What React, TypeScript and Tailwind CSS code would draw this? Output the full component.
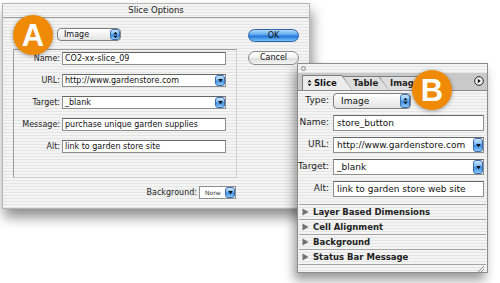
import React from "react";

const stripes =
  "bg-[image:repeating-linear-gradient(180deg,#f4f4f4_0px,#f4f4f4_2px,#e5e5e5_2px,#e5e5e5_3px)]";

function Cap({ updown }: { updown?: boolean }) {
  return (
    <span className="flex w-[10px] shrink-0 items-center justify-center rounded-[3px] border border-[#3b6db3] bg-[linear-gradient(180deg,#cfe7fd_0%,#73b5f3_45%,#3b8ae0_55%,#8fcaf7_100%)]">
      {updown ? (
        <svg width="5" height="8" viewBox="0 0 5 8">
          <path d="M0.5 3.3 L2.5 0.8 L4.5 3.3Z M0.5 4.7 L2.5 7.2 L4.5 4.7Z" fill="#111" />
        </svg>
      ) : (
        <svg width="5" height="5" viewBox="0 0 5 5">
          <path d="M0.2 1H4.8L2.5 4.2Z" fill="#111" />
        </svg>
      )}
    </span>
  );
}

function Field({ value, select }: { value: string; select?: boolean }) {
  return (
    <div className="flex h-[13px] w-[164px] items-stretch border border-[#8e8e8e] border-t-[#666] bg-white">
      <span className="flex-1 truncate pl-[2px] text-[8px] leading-[11px] text-[#111]">{value}</span>
      {select && <Cap />}
    </div>
  );
}

function Row({ label, children }: { label: string; children: React.ReactNode }) {
  return (
    <div className="flex items-center">
      <span className="w-[48px] pr-[2px] text-right text-[8px] text-[#222]">{label}</span>
      {children}
    </div>
  );
}

function PField({ value, select, w }: { value: string; select?: boolean; w?: string }) {
  return (
    <div className={`flex h-[16px] items-stretch border border-[#8e8e8e] border-t-[#666] bg-white ${w ?? "flex-1"}`}>
      <span className="flex-1 truncate whitespace-nowrap pl-[3px] text-[9px] leading-[14px] text-[#111]">{value}</span>
      {select && <Cap />}
    </div>
  );
}

function PRow({ label, children }: { label: string; children: React.ReactNode }) {
  return (
    <div className="flex items-center pr-[3px]">
      <span className="w-[35px] shrink-0 pr-[4px] text-right text-[9px] text-[#222]">{label}</span>
      {children}
    </div>
  );
}

function Section({ label }: { label: string }) {
  return (
    <div className="mx-[1px] flex h-[15px] items-center gap-[4px] border-t border-[#a4a4a4] pl-[3px]">
      <svg width="7" height="8" viewBox="0 0 7 8">
        <path d="M0.5 0.5 L6.5 4 L0.5 7.5Z" fill="#707070" />
      </svg>
      <span className="text-[8.5px] font-bold text-[#222]">{label}</span>
    </div>
  );
}

function Badge({ letter, className }: { letter: string; className: string }) {
  return (
    <div
      className={`absolute flex h-[40px] w-[40px] items-center justify-center rounded-full bg-[#ef8a06] font-['Liberation_Sans',sans-serif] text-[31px] font-bold leading-none text-white shadow-[0_1px_4px_rgba(0,0,0,0.35)] ${className}`}
    >
      {letter}
    </div>
  );
}

export default function App() {
  return (
    <div className="relative h-[283px] w-[500px] overflow-hidden bg-white font-['DejaVu_Sans',sans-serif]">
      {/* Slice Options dialog */}
      <div className={`absolute left-[2px] top-[3px] h-[206px] w-[308px] border border-[#b5b5b5] ${stripes} shadow-[2px_8px_12px_rgba(0,0,0,0.45)]`}>
        <div className="h-[14px] border-b border-[#a0a0a0] text-center text-[8.5px] leading-[13px] text-[#222]">
          Slice Options
        </div>
        <div className="flex pl-[10px] pt-[10px]">
          <div className="w-[224px]">
            <div className="flex h-[13px] items-center">
              <span className="w-[42px] pr-[2px] text-right text-[8px] text-[#222]">Slice:</span>
              <div className="ml-[2px] flex h-[13px] w-[64px] items-stretch overflow-hidden rounded-[4px] border border-[#7f7f7f] bg-[linear-gradient(180deg,#ffffff,#e3e3e3)]">
                <span className="flex-1 pl-[6px] text-[8px] leading-[11px] text-[#111]">Image</span>
                <Cap updown />
              </div>
            </div>
            <div className="mt-[8px] flex h-[129px] flex-col gap-[9px] border border-[#9c9c9c] border-b-[#cfcfcf] border-r-[#cfcfcf] pt-[2px]">
              <Row label="Name:">
                <Field value="CO2-xx-slice_09" />
              </Row>
              <Row label="URL:">
                <Field value="http://www.gardenstore.com" select />
              </Row>
              <Row label="Target:">
                <Field value="_blank" select />
              </Row>
              <Row label="Message:">
                <Field value="purchase unique garden supplies" />
              </Row>
              <Row label="Alt:">
                <Field value="link to garden store site" />
              </Row>
            </div>
            <div className="mt-[8px] flex items-center justify-end pr-[1px]">
              <span className="pr-[2px] text-[8px] text-[#222]">Background:</span>
              <div className="flex h-[13px] w-[37px] items-stretch border border-[#8e8e8e] bg-white">
                <span className="flex-1 pl-[5px] text-[6px] leading-[11px] text-[#333]">None</span>
                <Cap />
              </div>
            </div>
          </div>
          <div className="ml-[11px] flex flex-col gap-[9px] pt-[1px]">
            <div className="flex h-[13px] w-[51px] items-center justify-center rounded-full border border-[#2d5fa6] bg-[linear-gradient(180deg,#b3dafb_0%,#5aa5ef_45%,#2274d8_55%,#74c3f8_100%)] text-[8px] text-[#111]">
              OK
            </div>
            <div className="flex h-[14px] w-[51px] items-center justify-center rounded-full border border-[#8a8a8a] bg-[linear-gradient(180deg,#ffffff_0%,#f2f2f2_50%,#dddddd_55%,#f6f6f6_100%)] text-[8px] text-[#111]">
              Cancel
            </div>
          </div>
        </div>
      </div>

      {/* Slice palette */}
      <div className={`absolute left-[297px] top-[63px] flex h-[210px] w-[191px] flex-col border border-[#8c8c8c] ${stripes} shadow-[-3px_7px_10px_rgba(0,0,0,0.4)]`}>
        <div className="flex h-[9px] items-center pl-[3px]">
          <span className="h-[5px] w-[5px] rounded-full border border-[#888] bg-[#eee]" />
        </div>
        <div className="flex h-[18px] items-end border-b border-[#8a8a8a] bg-[#c9c9c9] pl-[4px] pr-[3px]">
          <div className="z-10 h-[15px] w-[50px] bg-[#7e7e7e] [clip-path:polygon(0_0,80%_0,100%_100%,0_100%)]">
            <div className="ml-[1px] mt-[1px] flex h-[14px] items-center gap-[2px] bg-[#ececec] pl-[4px] text-[8.5px] font-bold text-[#111] [clip-path:polygon(0_0,79%_0,100%_100%,0_100%)]">
              <svg width="5" height="8" viewBox="0 0 5 8">
                <path d="M0.5 3.3 L2.5 0.8 L4.5 3.3Z M0.5 4.7 L2.5 7.2 L4.5 4.7Z" fill="#222" />
              </svg>
              Slice
            </div>
          </div>
          <div className="z-[5] -ml-[10px] h-[14px] w-[47px] bg-[#7e7e7e] [clip-path:polygon(0_0,79%_0,100%_100%,0_100%)]">
            <div className="ml-[1px] mt-[1px] h-[13px] bg-[#dedede] pl-[10px] text-[8.5px] font-bold leading-[13px] text-[#222] [clip-path:polygon(0_0,78%_0,100%_100%,0_100%)]">
              Table
            </div>
          </div>
          <div className="-ml-[10px] h-[14px] w-[52px] bg-[#7e7e7e] [clip-path:polygon(0_0,80%_0,100%_100%,0_100%)]">
            <div className="ml-[1px] mt-[1px] h-[13px] bg-[#dedede] pl-[10px] text-[8.5px] font-bold leading-[13px] text-[#222] [clip-path:polygon(0_0,79%_0,100%_100%,0_100%)]">
              Image
            </div>
          </div>
          <div className="ml-auto flex h-[18px] items-center">
            <svg width="10" height="10" viewBox="0 0 10 10">
              <circle cx="5" cy="5" r="4.3" fill="#f4f4f4" stroke="#222" strokeWidth="1" />
              <path d="M3.8 2.8 L6.8 5 L3.8 7.2Z" fill="#111" />
            </svg>
          </div>
        </div>
        <div className="flex flex-1 flex-col pt-[2px]">
          <div className="flex flex-col gap-[6px]">
            <PRow label="Type:">
              <div className="flex h-[16px] w-[78px] items-stretch overflow-hidden rounded-[4px] border border-[#7f7f7f] bg-[linear-gradient(180deg,#ffffff,#e3e3e3)]">
                <span className="flex-1 pl-[7px] text-[9px] leading-[14px] text-[#111]">Image</span>
                <Cap updown />
              </div>
            </PRow>
            <PRow label="Name:">
              <PField value="store_button" />
            </PRow>
            <PRow label="URL:">
              <PField value="http://www.gardenstore.com" select />
            </PRow>
            <PRow label="Target:">
              <PField value="_blank" select />
            </PRow>
            <PRow label="Alt:">
              <PField value="link to garden store web site" />
            </PRow>
          </div>
          <div className="mt-[7px]">
            <Section label="Layer Based Dimensions" />
            <Section label="Cell Alignment" />
            <Section label="Background" />
            <Section label="Status Bar Message" />
            <div className="mx-[1px] flex h-[8px] justify-end border-t border-[#a4a4a4]">
              <svg width="10" height="8" viewBox="0 0 10 8" className="mr-[1px]">
                <path d="M9 1 L2 8 M9 4 L5 8 M9 7 L8 8" stroke="#8a8a8a" strokeWidth="1" />
              </svg>
            </div>
          </div>
        </div>
      </div>

      <Badge letter="A" className="left-[13px] top-[15px]" />
      <Badge letter="B" className="left-[412px] top-[70px]" />
    </div>
  );
}
